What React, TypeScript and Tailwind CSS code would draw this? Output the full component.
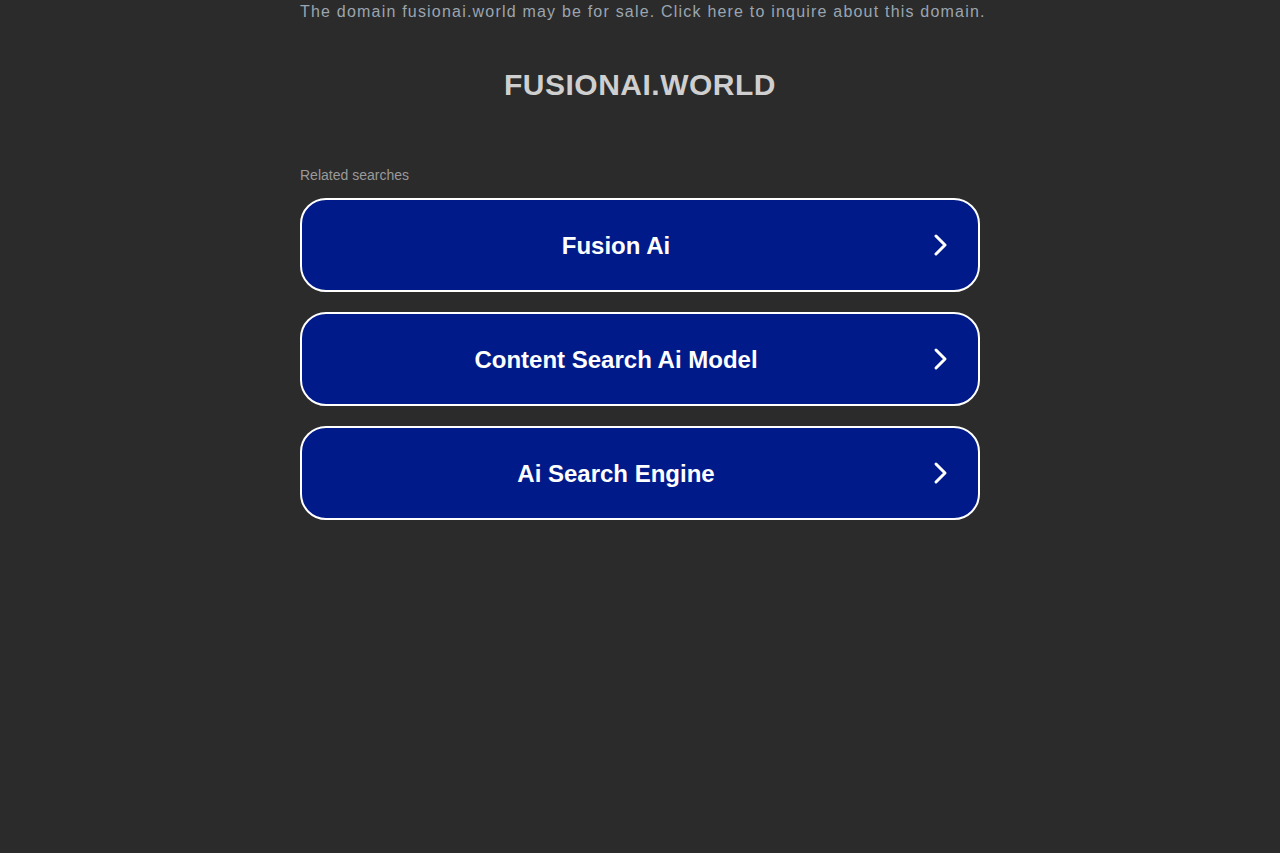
import React from "react";

const items = ["Fusion Ai", "Content Search Ai Model", "Ai Search Engine"];

function Chevron() {
  return (
    <svg width="18" height="24" viewBox="0 0 18 24" fill="none">
      <path d="M4 3 L13 12 L4 21" stroke="white" strokeWidth="3" strokeLinecap="round" strokeLinejoin="round" />
    </svg>
  );
}

export default function App() {
  return (
    <div className="min-h-[853px] w-full bg-[#2b2b2b]" style={{ fontFamily: '"Liberation Sans", Arial, sans-serif' }}>
      <div className="mx-auto w-[680px]">
        <div className="pt-[3px] text-[16px] leading-[18px] tracking-[1.2px] text-[#9ba5b0] whitespace-nowrap">
          The domain fusionai.world may be for sale. Click here to inquire about this domain.
        </div>
        <div className="mt-[48px] text-center text-[30px] leading-[32px] font-bold tracking-[0.5px] text-[#cfcfcf]">
          FUSIONAI.WORLD
        </div>
        <div className="mt-[66px] text-[14px] leading-[16px] text-[#9a9a9a]">Related searches</div>
        <div className="mt-[15px] flex flex-col gap-[20px]">
          {items.map((t) => (
            <div
              key={t}
              className="flex h-[94px] items-center rounded-[26px] border-2 border-white bg-[#011a8a] pr-[28px]"
            >
              <div className="flex-1 pr-[2px] pt-[2px] text-center text-[24px] font-bold text-white">{t}</div>
              <Chevron />
            </div>
          ))}
        </div>
      </div>
    </div>
  );
}
